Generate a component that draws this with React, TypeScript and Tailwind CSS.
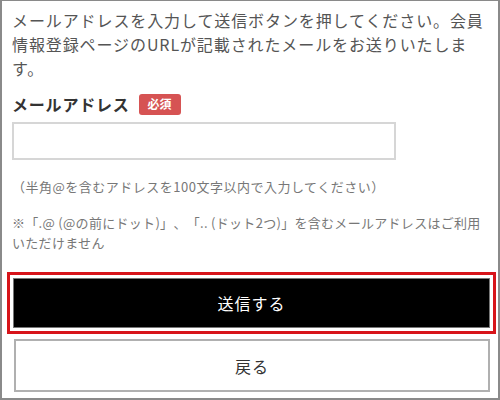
export default function App() {
  return (
    <div
      className="w-[500px] h-[400px] bg-white border-t border-x-2 border-b-2 border-[#8a8a8a] pl-[10px] pr-[9px] pt-[7px] overflow-hidden [text-spacing-trim:space-all]"
      style={{ fontFamily: '"Noto Sans CJK JP", "Noto Sans", sans-serif' }}
    >
      <p className="text-[16px] leading-[24px] tracking-[0.9px] text-[#555] whitespace-nowrap">
        メールアドレスを入力して送信ボタンを押してください。会員
        <br />
        情報登録ページのURLが記載されたメールをお送りいたしま
        <br />
        す。
      </p>

      <div className="mt-[12px] flex items-center gap-[9px] h-[24px]">
        <span className="text-[16px] font-bold tracking-[0.8px] text-[#333]">メールアドレス</span>
        <span className="inline-flex items-center justify-center w-[42px] h-[21px] rounded-[3px] bg-[#d65353] text-white text-[12px] font-bold">
          必須
        </span>
      </div>

      <input
        type="email"
        className="mt-[6px] block w-[384px] h-[38px] border-2 border-[#d6d6d6] bg-white px-2 text-[14px] outline-none"
      />

      <p className="mt-[17px] text-[13px] leading-[20px] tracking-[0.5px] text-[#777] whitespace-nowrap">
        （半角@を含むアドレスを100文字以内で入力してください）
      </p>

      <p className="mt-[16px] text-[13px] leading-[20px] tracking-[0.3px] text-[#777] whitespace-nowrap">
        ※「.@ (@の前にドット)」、「.. (ドット2つ)」を含むメールアドレスはご利用
        <br />
        いただけません
      </p>

      <div className="mt-[25px] flex flex-col">
        <button className="ml-[1px] w-[477px] h-[50px] bg-black border border-[#777] text-white text-[16px] tracking-[1px] outline-[3px] outline-solid outline-[#d7141a] outline-offset-[3px]">
          送信する
        </button>
        <button className="mt-[11px] ml-[2px] w-[476px] h-[53px] bg-white border-2 border-[#b0b0b0] text-[#333] text-[16px] tracking-[1px]">
          戻る
        </button>
      </div>
    </div>
  )
}
